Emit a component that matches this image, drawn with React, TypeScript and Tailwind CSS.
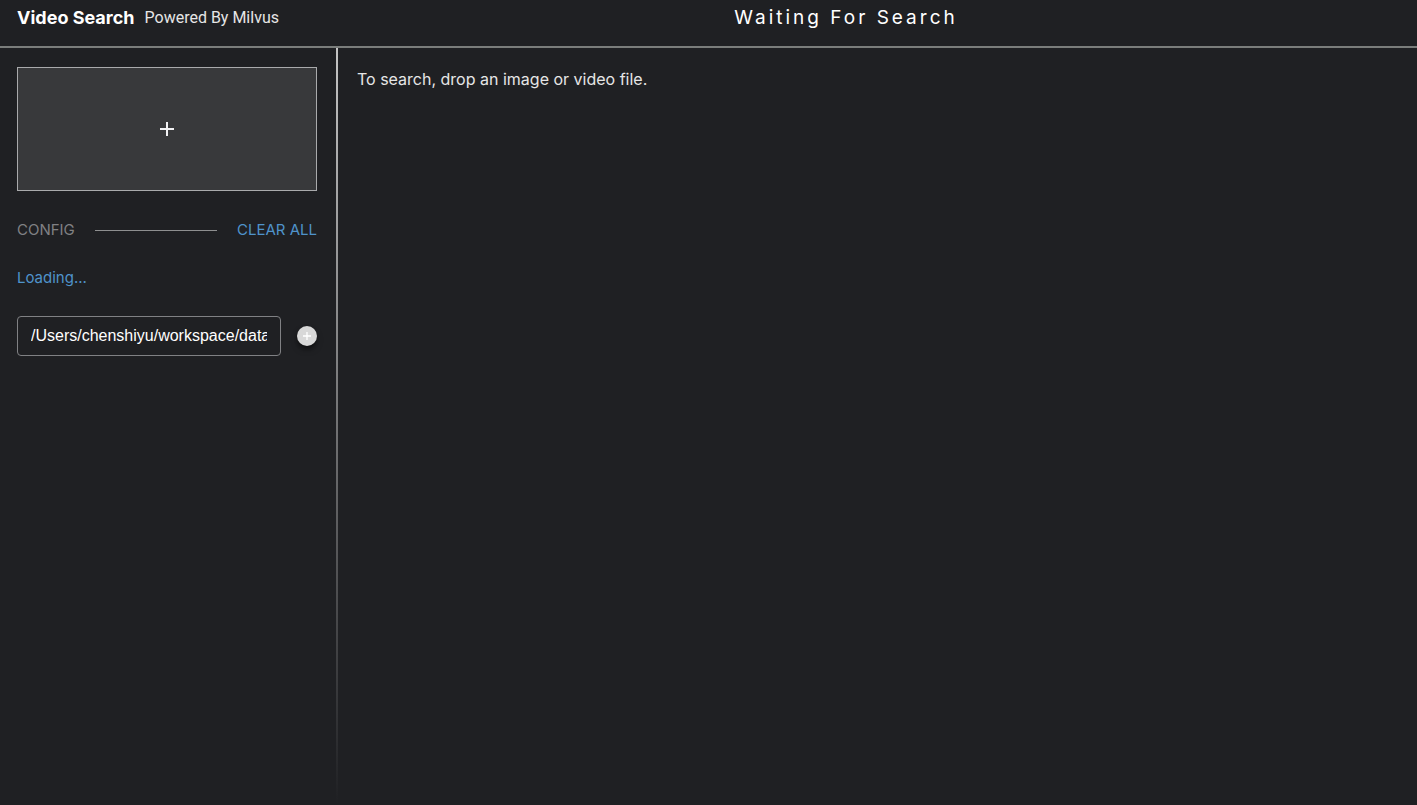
import { useState } from "react";

export default function App() {
  const [path, setPath] = useState("/Users/chenshiyu/workspace/data/");

  return (
    <div className="flex min-h-screen flex-col bg-[#1f2023] font-['Inter',sans-serif] text-base text-[#e6e6e6]">
      <header className="flex h-12 items-start border-b-2 border-[#7a7d7b] pt-1 pl-[17px]">
        <div className="flex items-center gap-[10px]">
          <h1 className="text-lg leading-7 font-bold text-white">Video Search</h1>
          <span className="font-['Roboto',sans-serif] leading-7">Powered By Milvus</span>
        </div>
        <p className="flex-1 pr-1 text-center text-[19px] leading-7 tracking-[3px] text-white">
          Waiting For Search
        </p>
      </header>

      <div className="flex flex-1">
        <aside className="w-[336px] shrink-0 pt-[19px] pr-[19px] pl-[17px]">
          <button
            type="button"
            aria-label="Upload an image or video"
            className="flex h-[124px] w-full items-center justify-center border border-[#a9aaac] bg-[#38393b]"
          >
            <svg viewBox="0 0 16 16" className="size-4" aria-hidden="true">
              <path d="M8 1v14M1 8h14" stroke="#f2f2f4" strokeWidth="2" fill="none" />
            </svg>
          </button>

          <div className="mt-[27px] flex items-center gap-5 text-[15px] leading-6">
            <h2 className="text-[#808184]">CONFIG</h2>
            <div className="h-px flex-1 bg-[#8e8f90]" />
            <button type="button" className="text-[#4f93cb]">
              CLEAR ALL
            </button>
          </div>

          <p className="mt-6 text-[15px] leading-6 text-[#4f93cb]">Loading...</p>

          <div className="mt-[26px] flex items-center gap-4">
            <input
              type="text"
              aria-label="Path of the video folder"
              value={path}
              onChange={(e) => setPath(e.target.value)}
              className="h-10 min-w-0 flex-1 rounded border border-[#808184] bg-transparent px-[13px] font-['Liberation_Sans',sans-serif] text-white outline-none"
            />
            <button
              type="button"
              aria-label="Add path"
              className="flex size-5 shrink-0 items-center justify-center rounded-full bg-[#d8d8d8] shadow-md shadow-black/50"
            >
              <svg viewBox="0 0 10 10" className="size-[10px]" aria-hidden="true">
                <path d="M5 1v8M1 5h8" stroke="white" strokeWidth="1.3" fill="none" />
              </svg>
            </button>
          </div>
        </aside>

        <div className="w-0.5 bg-linear-to-b from-[#c4c4c4] to-transparent" />

        <main className="flex-1 px-[19px] pt-[19px]">
          <p>To search, drop an image or video file.</p>
        </main>
      </div>
    </div>
  );
}
